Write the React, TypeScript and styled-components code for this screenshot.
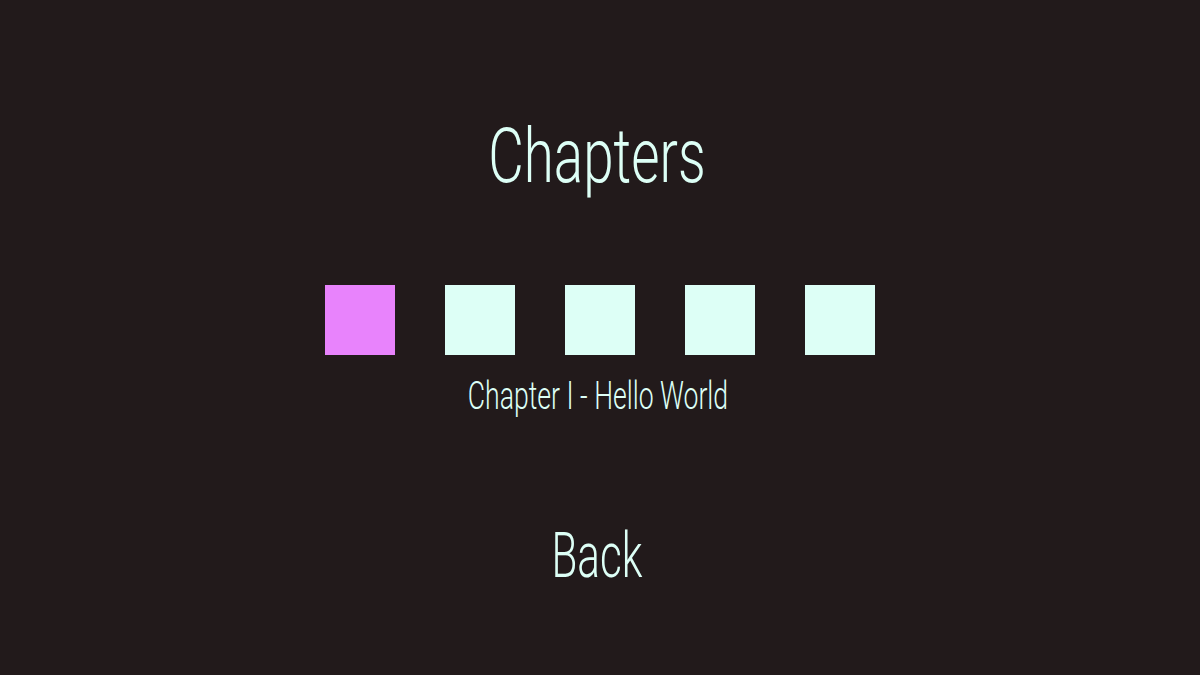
import React, { useState } from "react";
import styled, { createGlobalStyle } from "styled-components";

const GlobalStyle = createGlobalStyle`
  html, body {
    margin: 0;
    padding: 0;
    background: #221a1b;
  }
  body {
    font-family: Roboto, "Liberation Sans", sans-serif;
  }
`;

const Screen = styled.main`
  width: 1200px;
  height: 675px;
  background: #221a1b;
  color: #ddfff6;
  display: flex;
  flex-direction: column;
  align-items: center;
  box-sizing: border-box;
  padding-top: 118px;
  overflow: hidden;
`;

const Label = styled.span<{ $size: number; $scale?: number }>`
  display: inline-block;
  font-family: Roboto, "Liberation Sans", sans-serif;
  font-weight: 300;
  font-size: ${(p) => p.$size}px;
  line-height: 1;
  white-space: nowrap;
  transform: scaleX(${(p) => p.$scale ?? 0.7});
`;

const Title = styled.h1`
  margin: 0 6px 0 0;
  height: 76px;
  display: flex;
  justify-content: center;
`;

const ChapterRow = styled.div`
  display: flex;
  gap: 50px;
  margin-top: 91px;
`;

const ChapterTile = styled.button<{ $active: boolean }>`
  width: 70px;
  height: 70px;
  border: none;
  padding: 0;
  cursor: pointer;
  background: ${(p) => (p.$active ? "#e883fc" : "#ddfff6")};
`;

const ChapterName = styled.div`
  margin: 22px 4px 0 0;
  height: 38px;
  display: flex;
  justify-content: center;
`;

const BackButton = styled.button`
  margin: 109px 6px 0 0;
  height: 63px;
  background: none;
  border: none;
  padding: 0;
  color: #ddfff6;
  cursor: pointer;
  display: flex;
  justify-content: center;
`;

const chapters = [
  "Chapter I - Hello World",
  "Chapter II",
  "Chapter III",
  "Chapter IV",
  "Chapter V",
];

export default function App() {
  const [active, setActive] = useState(0);
  return (
    <>
      <GlobalStyle />
      <Screen>
        <Title>
          <Label $size={76} $scale={0.72}>
            Chapters
          </Label>
        </Title>
        <ChapterRow>
          {chapters.map((name, i) => (
            <ChapterTile
              key={name}
              $active={i === active}
              onClick={() => setActive(i)}
              aria-label={name}
            />
          ))}
        </ChapterRow>
        <ChapterName>
          <Label $size={38}>{chapters[active]}</Label>
        </ChapterName>
        <BackButton>
          <Label $size={63} $scale={0.67}>
            Back
          </Label>
        </BackButton>
      </Screen>
    </>
  );
}
